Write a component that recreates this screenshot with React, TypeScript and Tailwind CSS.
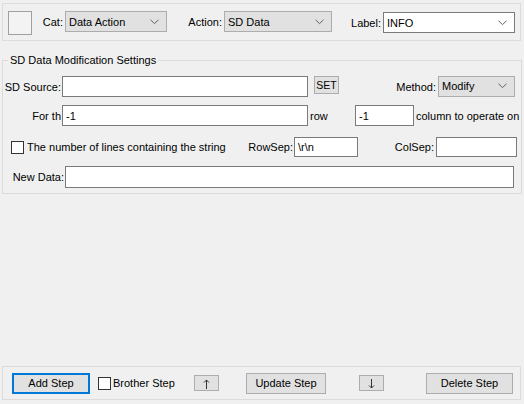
import React from 'react';

const Chevron: React.FC = () => (
  <svg width="9" height="6" viewBox="0 0 9 6" className="shrink-0">
    <polyline points="0.5,0.8 4.5,4.6 8.5,0.8" fill="none" stroke="#5f5f5f" strokeWidth="1" />
  </svg>
);

const Arrow: React.FC<{ down?: boolean }> = ({ down }) => (
  <svg width="7" height="10" viewBox="0 0 7 10" className={down ? 'rotate-180 mt-[2px]' : 'mt-[2px]'}>
    <line x1="3.5" y1="1" x2="3.5" y2="10" stroke="#333333" strokeWidth="1" />
    <polyline points="1,3.5 3.5,1 6,3.5" fill="none" stroke="#333333" strokeWidth="1" />
  </svg>
);

interface ComboProps {
  value: string;
  width: string;
  white?: boolean;
}

const Combo: React.FC<ComboProps> = ({ value, width, white }) => (
  <div
    className={`${width} shrink-0 h-[21px] flex items-center justify-between pl-[3px] pr-[7px] border ${
      white ? 'bg-white border-[#7a7a7a]' : 'bg-[#e1e1e1] border-[#adadad]'
    }`}
  >
    <span>{value}</span>
    <Chevron />
  </div>
);

const Field: React.FC<{ width: string; value?: string; height?: string }> = ({ width, value, height }) => (
  <div className={`${width} ${height ?? 'h-[21px]'} shrink-0 bg-white border border-[#7a7a7a] flex items-center px-[3px]`}>
    {value}
  </div>
);

const Check: React.FC = () => <div className="w-[13px] h-[13px] bg-white border border-[#333333] shrink-0" />;

const Btn: React.FC<{ width: string; height?: string; primary?: boolean; children: React.ReactNode }> = ({
  width,
  height,
  primary,
  children,
}) => (
  <div
    className={`${width} ${height ?? 'h-[21px]'} shrink-0 bg-[#e1e1e1] flex items-center justify-center ${
      primary ? 'border-2 border-[#0078d7]' : 'border border-[#adadad]'
    }`}
  >
    {children}
  </div>
);

export default function App() {
  return (
    <div
      className="w-[524px] h-[404px] bg-[#f0f0f0] flex flex-col text-[11px] text-black leading-[16px] whitespace-nowrap"
      style={{ fontFamily: '"Liberation Sans", Arial, sans-serif' }}
    >
      {/* step header */}
      <div className="mt-[3px] ml-[2px] w-[519px] h-[38px] border border-[#dcdcdc] flex items-start">
        <div className="ml-[5px] mt-[7px] w-[24px] h-[24px] shrink-0 border border-[#a0a0a0] bg-[#f3f3f3]" />
        <div className="w-[33px] shrink-0 mt-[7px] h-[21px] flex items-center justify-end pr-[2px]">Cat:</div>
        <div className="mt-[7px]">
          <Combo value="Data Action" width="w-[102px]" />
        </div>
        <div className="w-[57px] shrink-0 mt-[7px] h-[21px] flex items-center justify-end pr-[2px]">Action:</div>
        <div className="mt-[7px]">
          <Combo value="SD Data" width="w-[108px]" />
        </div>
        <div className="w-[51px] shrink-0 mt-[8px] h-[21px] flex items-center justify-end pr-[2px]">Label:</div>
        <div className="mt-[8px]">
          <Combo value="INFO" width="w-[132px]" white />
        </div>
      </div>

      {/* settings group */}
      <fieldset className="mt-[11px] ml-[2px] w-[520px] border border-[#dcdcdc] pb-[5px]">
        <legend className="ml-[5px] px-[2px] leading-[16px]">SD Data Modification Settings</legend>

        <div className="mt-[8px] flex items-center h-[21px]">
          <div className="w-[59px] shrink-0 text-right pr-[1px]">SD Source:</div>
          <Field width="w-[246px]" />
          <div className="ml-[6px] self-start">
            <Btn width="w-[25px]" height="h-[18px]">
              <span className="text-[10.5px]">SET</span>
            </Btn>
          </div>
          <div className="w-[99px] shrink-0 text-right pr-[2px]">Method:</div>
          <div className="-mt-[1px]">
            <Combo value="Modify" width="w-[77px]" />
          </div>
        </div>

        <div className="mt-[8px] flex items-center h-[21px]">
          <div className="w-[59px] shrink-0 text-right pr-[1px]">For th</div>
          <Field width="w-[246px]" value="-1" />
          <div className="w-[47px] shrink-0 pl-[2px]">row</div>
          <Field width="w-[59px]" value="-1" />
          <div className="pl-[2px]">column to operate on</div>
        </div>

        <div className="mt-[11px] flex items-center h-[20px]">
          <div className="w-[291px] shrink-0 flex items-center pl-[8px]">
            <Check />
            <span className="ml-[3px]">The number of lines containing the string</span>
            <span className="ml-auto pr-[1px]">RowSep:</span>
          </div>
          <Field width="w-[64px]" height="h-[20px]" value="\r\n" />
          <div className="w-[78px] shrink-0 text-right pr-[2px]">ColSep:</div>
          <Field width="w-[81px]" height="h-[20px]" />
        </div>

        <div className="mt-[9px] flex items-center h-[22px]">
          <div className="w-[62px] shrink-0 text-right pr-[1px]">New Data:</div>
          <Field width="w-[449px]" height="h-[22px]" />
        </div>
      </fieldset>

      {/* step buttons */}
      <div className="mt-auto mb-[4px] ml-[2px] w-[519px] h-[34px] border border-[#dcdcdc] flex items-center">
        <div className="ml-[9px]">
          <Btn width="w-[78px]" primary>
            Add Step
          </Btn>
        </div>
        <div className="ml-[8px] flex items-center">
          <Check />
          <span className="ml-[2px]">Brother Step</span>
        </div>
        <div className="ml-auto flex items-center">
          <Btn width="w-[25px]" height="h-[16px]">
            <Arrow />
          </Btn>
        </div>
        <div className="ml-[27px]">
          <Btn width="w-[80px]">Update Step</Btn>
        </div>
        <div className="ml-[33px]">
          <Btn width="w-[25px]" height="h-[16px]">
            <Arrow down />
          </Btn>
        </div>
        <div className="ml-[42px] mr-[7px]">
          <Btn width="w-[87px]">Delete Step</Btn>
        </div>
      </div>
    </div>
  );
}
